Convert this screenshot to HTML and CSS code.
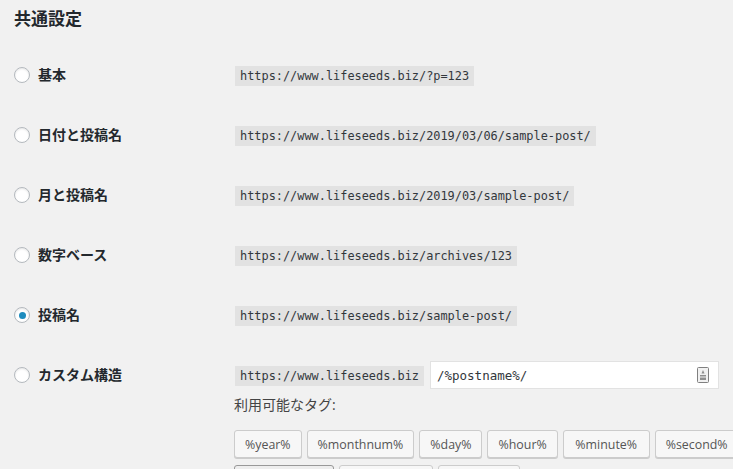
FILE: index.html
```html
<!DOCTYPE html>
<html lang="ja">
<head>
    <meta charset="UTF-8">
    <meta name="viewport" content="width=device-width, initial-scale=1.0">
    <title>パーマリンク設定</title>
    <link rel="stylesheet" href="styles.css">
</head>
<body>
    <div class="wrap">
        <h2 class="title">共通設定</h2>
        <div class="rows">
            <div class="row">
                <label class="choice"><span class="radio"></span>基本</label>
                <div class="value"><code>https://www.lifeseeds.biz/?p=123</code></div>
            </div>
            <div class="row">
                <label class="choice"><span class="radio"></span>日付と投稿名</label>
                <div class="value"><code>https://www.lifeseeds.biz/2019/03/06/sample-post/</code></div>
            </div>
            <div class="row">
                <label class="choice"><span class="radio"></span>月と投稿名</label>
                <div class="value"><code>https://www.lifeseeds.biz/2019/03/sample-post/</code></div>
            </div>
            <div class="row">
                <label class="choice"><span class="radio"></span>数字ベース</label>
                <div class="value"><code>https://www.lifeseeds.biz/archives/123</code></div>
            </div>
            <div class="row">
                <label class="choice"><span class="radio checked"></span>投稿名</label>
                <div class="value"><code>https://www.lifeseeds.biz/sample-post/</code></div>
            </div>
            <div class="row custom">
                <label class="choice"><span class="radio"></span>カスタム構造</label>
                <div class="value">
                    <div class="structure">
                        <code>https://www.lifeseeds.biz</code>
                        <div class="text-input">
                            <span class="input-text">/%postname%/</span>
                            <svg class="key-icon" width="12" height="16" viewBox="0 0 12 16">
                                <rect x="0.5" y="0.5" width="11" height="15" rx="1" fill="#f1f1f1" stroke="#808080"/>
                                <path d="M6 3l1.5 3.5h-3z M3 8h6v1.5H3z M3 10.5h6V13H3z" fill="#8f8f8f"/>
                            </svg>
                        </div>
                    </div>
                    <p class="tags-label">利用可能なタグ:</p>
                    <ul class="tags">
                        <li><button class="tag">%year%</button></li>
                        <li><button class="tag">%monthnum%</button></li>
                        <li><button class="tag">%day%</button></li>
                        <li><button class="tag">%hour%</button></li>
                        <li><button class="tag tag-minute">%minute%</button></li>
                        <li><button class="tag">%second%</button></li>
                        <li><button class="tag active">%postname%</button></li>
                        <li><button class="tag tag-category">%category%</button></li>
                        <li><button class="tag">%author%</button></li>
                    </ul>
                </div>
            </div>
        </div>
    </div>
</body>
</html>
```
FILE: styles.css
```css
html, body {
    height: 469px;
    overflow: hidden;
}
body {
    margin: 0;
    padding: 0;
    background-color: #f1f1f1;
    color: #23282d;
    font-family: "Open Sans", "Noto Sans CJK JP", sans-serif;
    font-size: 14px;
}
.wrap {
    width: 733px;
    height: 469px;
    padding-left: 14px;
    box-sizing: border-box;
    overflow: hidden;
}
.title {
    margin: 0;
    padding-top: 7px;
    height: 47px;
    line-height: 24px;
    box-sizing: border-box;
    font-size: 17px;
    font-weight: 700;
}
.rows {
    padding-top: 15px;
}
.row {
    display: flex;
    height: 60px;
}
.custom {
    height: auto;
}
.choice {
    display: flex;
    align-items: flex-start;
    width: 221px;
    flex: none;
    font-weight: 700;
    line-height: 26px;
}
.radio {
    width: 14px;
    height: 14px;
    margin: 5px 8px 0 0;
    flex: none;
    border: 1px solid #b4b9be;
    border-radius: 50%;
    background-color: #fff;
    box-shadow: inset 0 1px 2px rgba(0, 0, 0, 0.1);
    display: flex;
    align-items: center;
    justify-content: center;
}
.checked::before {
    content: "";
    width: 7px;
    height: 7px;
    border-radius: 50%;
    background-color: #1e8cbe;
}
.value {
    flex: none;
    width: 498px;
    padding-top: 3px;
}
code {
    display: inline-block;
    height: 20px;
    line-height: 21px;
    padding: 0 5px;
    background-color: #e2e2e2;
    color: #32373c;
    font-family: "DejaVu Sans Mono", monospace;
    font-size: 11.9px;
}
.structure {
    display: flex;
    align-items: flex-start;
    padding-top: 1px;
}
.text-input {
    display: flex;
    align-items: center;
    justify-content: space-between;
    width: 289px;
    height: 28px;
    margin: -5px 0 0 6px;
    padding: 0 9px 0 6px;
    flex: none;
    box-sizing: border-box;
    border: 1px solid #e2e2e2;
    background-color: #fff;
    font-family: "DejaVu Sans Mono", monospace;
    font-size: 12.5px;
    color: #32373c;
}
.tags-label {
    margin: 6px 0 0 -1px;
    line-height: 20px;
    font-size: 14px;
    color: #444;
}
.tags {
    display: flex;
    flex-wrap: wrap;
    gap: 7px 5px;
    list-style: none;
    margin: 15px 0 0 -1px;
    padding: 0;
    width: 600px;
}
.tags li {
    height: 28px;
}
.tag {
    display: block;
    height: 28px;
    padding: 0 10px;
    border: 1px solid #ccc;
    border-radius: 3px;
    background-color: #f7f7f7;
    box-shadow: 0 1px 0 #ccc;
    color: #555;
    font-family: "Open Sans", sans-serif;
    font-size: 12.4px;
}
.tag-minute {
    width: 87px;
}
.tag-category {
    width: 94px;
}
.active {
    width: 100px;
    border-color: #999;
    background-color: #eee;
}
```
